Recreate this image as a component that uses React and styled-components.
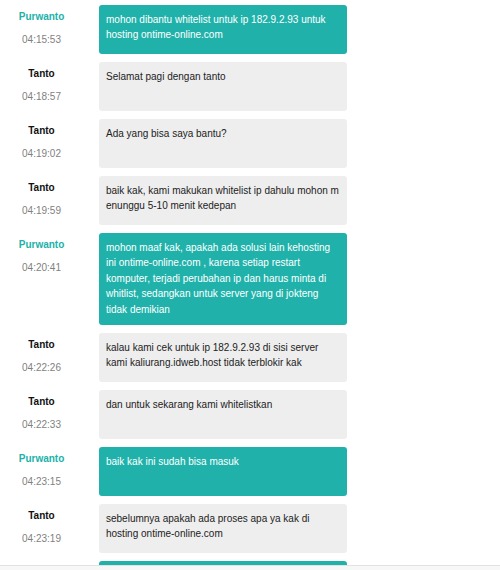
import React from "react";
import styled, { createGlobalStyle } from "styled-components";

// line breaks kept as they wrap in the chat window
const messages = [
  { from: "Purwanto", time: "04:15:53", me: true, text: "mohon dibantu whitelist untuk ip 182.9.2.93 untuk\nhosting ontime-online.com" },
  { from: "Tanto", time: "04:18:57", text: "Selamat pagi dengan tanto" },
  { from: "Tanto", time: "04:19:02", text: "Ada yang bisa saya bantu?" },
  { from: "Tanto", time: "04:19:59", text: "baik kak, kami makukan whitelist ip dahulu mohon m\nenunggu 5-10 menit kedepan" },
  {
    from: "Purwanto",
    time: "04:20:41",
    me: true,
    text:
      "mohon maaf kak, apakah ada solusi lain kehosting\nini ontime-online.com , karena setiap restart\nkomputer, terjadi perubahan ip dan harus minta di\nwhitlist, sedangkan untuk server yang di jokteng\ntidak demikian",
  },
  { from: "Tanto", time: "04:22:26", text: "kalau kami cek untuk ip 182.9.2.93 di sisi server\nkami kaliurang.idweb.host tidak terblokir kak" },
  { from: "Tanto", time: "04:22:33", text: "dan untuk sekarang kami whitelistkan" },
  { from: "Purwanto", time: "04:23:15", me: true, text: "baik kak ini sudah bisa masuk" },
  { from: "Tanto", time: "04:23:19", text: "sebelumnya apakah ada proses apa ya kak di\nhosting ontime-online.com" },
  { from: "Purwanto", time: "04:24:02", me: true, text: "tidak ada kak" },
];

export default function App() {
  return (
    <>
      <GlobalStyle />
      <Page>
        <ChatList>
          {messages.map((m, i) => (
            <Row key={i}>
              <Meta>
                <Name me={m.me}>{m.from}</Name>
                <Time>{m.time}</Time>
              </Meta>
              <Bubble me={m.me}>{m.text}</Bubble>
            </Row>
          ))}
        </ChatList>
        <Footer />
      </Page>
    </>
  );
}

const GlobalStyle = createGlobalStyle`
  html, body {
    margin: 0;
    padding: 0;
    background: #fff;
    font-family: "Liberation Sans", Arial, sans-serif;
  }
`;

const Page = styled.div`
  width: 500px;
  height: 570px;
  display: flex;
  flex-direction: column;
  overflow: hidden;
`;

const ChatList = styled.div`
  height: 566px;
  flex-shrink: 0;
  overflow: hidden;
  box-sizing: border-box;
  border-bottom: 1px solid #e2e2e2;
  padding-top: 5px;
  display: flex;
  flex-direction: column;
  gap: 8px;
`;

const Row = styled.div`
  display: flex;
  align-items: flex-start;
  flex-shrink: 0;
`;

const Meta = styled.div`
  width: 83px;
  flex-shrink: 0;
  display: flex;
  flex-direction: column;
  align-items: center;
  gap: 8px;
  padding-top: 4px;
  font-size: 10px;
  line-height: 15px;
`;

const Name = styled.div`
  font-weight: bold;
  color: ${(p) => (p.me ? "#20b2aa" : "#111")};
`;

const Time = styled.div`
  color: #7f7f7f;
`;

const Bubble = styled.div`
  margin-left: 16px;
  width: 248px;
  min-height: 49px;
  box-sizing: border-box;
  padding: 7px 4px 8px 7px;
  border-radius: 3px;
  font-size: 10px;
  line-height: 15.4px;
  white-space: pre-line;
  background: ${(p) => (p.me ? "#20b2aa" : "#eeeeee")};
  color: ${(p) => (p.me ? "#fff" : "#222")};
`;

const Footer = styled.div`
  flex: 1;
  background: #f7f7f7;
`;
